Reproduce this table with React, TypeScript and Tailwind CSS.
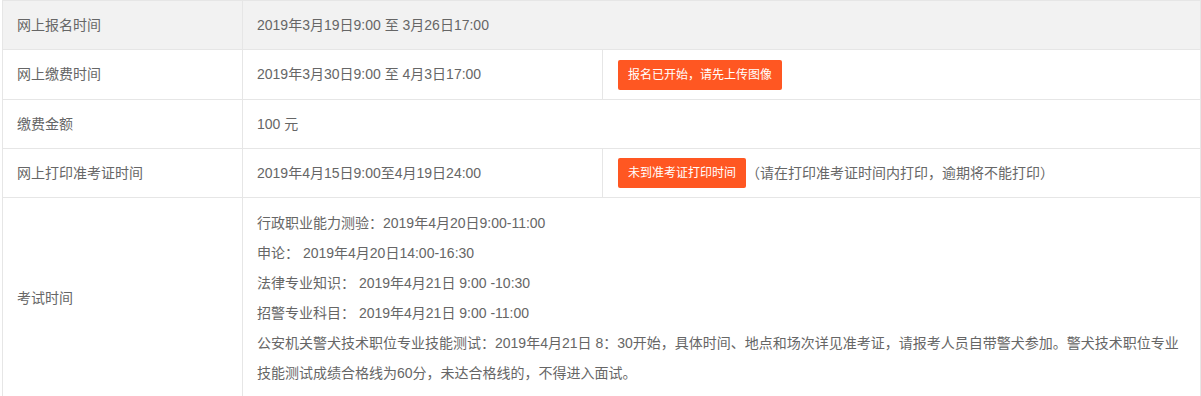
const font = '"Liberation Sans","Noto Sans CJK SC",sans-serif';

function Badge({ children }: { children: React.ReactNode }) {
  return (
    <span className="inline-flex h-[30px] items-center rounded-[2px] bg-[#ff5722] px-[10px] text-[12px] text-white">
      {children}
    </span>
  );
}

function Label({ children }: { children: React.ReactNode }) {
  return (
    <div className="flex w-[240px] shrink-0 items-center border-r border-[#e6e6e6] pl-[14px]">
      {children}
    </div>
  );
}

const examLines = [
  "行政职业能力测验：2019年4月20日9:00-11:00",
  "申论： 2019年4月20日14:00-16:30",
  "法律专业知识： 2019年4月21日 9:00 -10:30",
  "招警专业科目： 2019年4月21日 9:00 -11:00",
  "公安机关警犬技术职位专业技能测试：2019年4月21日 8：30开始，具体时间、地点和场次详见准考证，请报考人员自带警犬参加。警犬技术职位专业技能测试成绩合格线为60分，未达合格线的，不得进入面试。",
];

export default function App() {
  return (
    <div className="bg-white pl-[2px]" style={{ fontFamily: font }}>
      <div className="w-[1199px] border border-[#e6e6e6] text-[14px] text-[#666]">
        <div className="flex h-[49px] border-b border-[#e6e6e6] bg-[#f2f2f2]">
          <Label>网上报名时间</Label>
          <div className="flex items-center pl-[14px]">2019年3月19日9:00 至 3月26日17:00</div>
        </div>
        <div className="flex h-[50px] border-b border-[#e6e6e6]">
          <Label>网上缴费时间</Label>
          <div className="flex w-[360px] shrink-0 items-center border-r border-[#e6e6e6] pl-[14px]">
            2019年3月30日9:00 至 4月3日17:00
          </div>
          <div className="flex items-center pl-[15px]">
            <Badge>报名已开始，请先上传图像</Badge>
          </div>
        </div>
        <div className="flex h-[49px] border-b border-[#e6e6e6]">
          <Label>缴费金额</Label>
          <div className="flex items-center pl-[14px]">100 元</div>
        </div>
        <div className="flex h-[49px] border-b border-[#e6e6e6]">
          <Label>网上打印准考证时间</Label>
          <div className="flex w-[360px] shrink-0 items-center border-r border-[#e6e6e6] pl-[14px]">
            2019年4月15日9:00至4月19日24:00
          </div>
          <div className="flex items-center pl-[15px]">
            <Badge>未到准考证打印时间</Badge>
            <span>（请在打印准考证时间内打印，逾期将不能打印）</span>
          </div>
        </div>
        <div className="flex">
          <Label>考试时间</Label>
          <div className="flex-1 py-[10px] pl-[14px] pr-[15px] leading-[30px]">
            {examLines.map((t) => (
              <p key={t}>{t}</p>
            ))}
          </div>
        </div>
      </div>
    </div>
  );
}
